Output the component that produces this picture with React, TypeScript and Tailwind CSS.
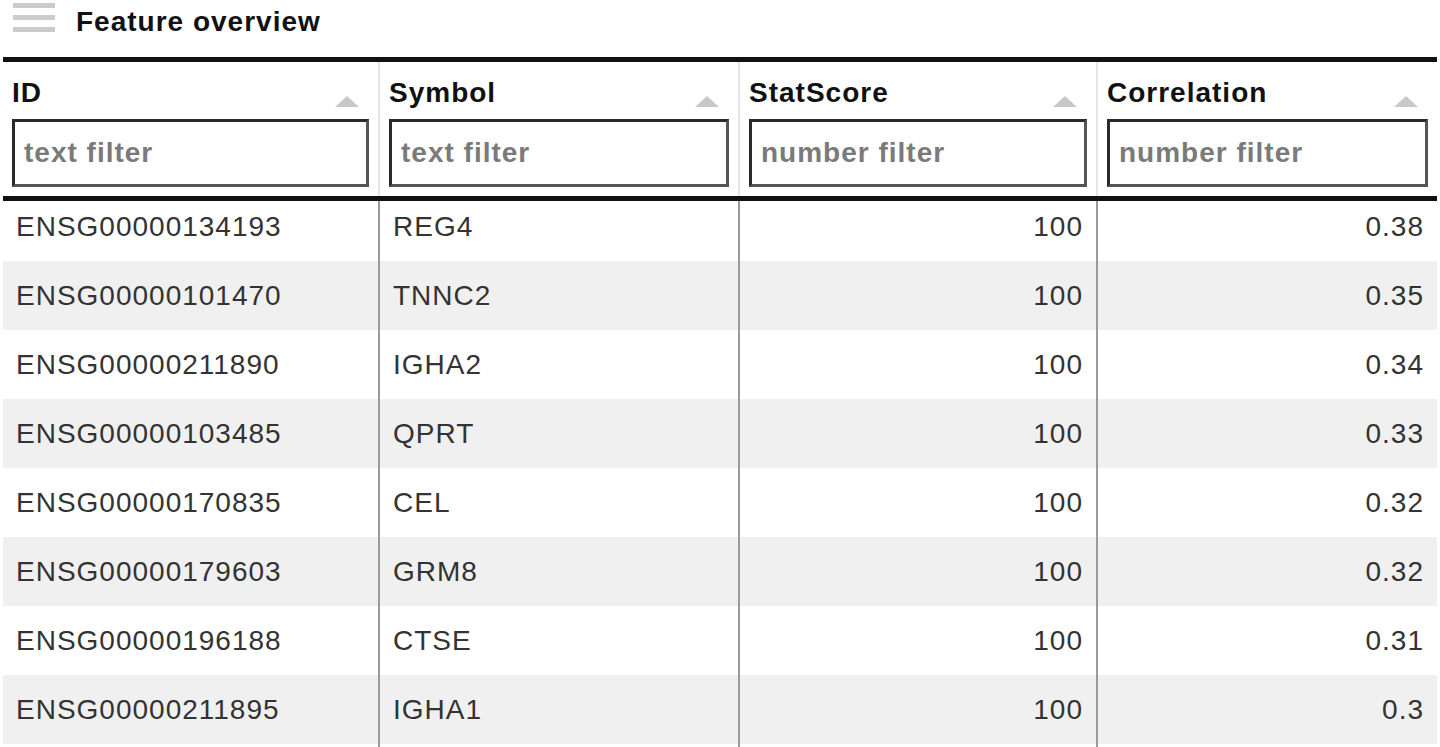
import React from "react";

const rows = [
  ["ENSG00000134193", "REG4", "100", "0.38"],
  ["ENSG00000101470", "TNNC2", "100", "0.35"],
  ["ENSG00000211890", "IGHA2", "100", "0.34"],
  ["ENSG00000103485", "QPRT", "100", "0.33"],
  ["ENSG00000170835", "CEL", "100", "0.32"],
  ["ENSG00000179603", "GRM8", "100", "0.32"],
  ["ENSG00000196188", "CTSE", "100", "0.31"],
  ["ENSG00000211895", "IGHA1", "100", "0.3"],
];

const headers = [
  ["ID", "text filter"],
  ["Symbol", "text filter"],
  ["StatScore", "number filter"],
  ["Correlation", "number filter"],
];

function SortIcon() {
  return (
    <svg width="24" height="11" viewBox="0 0 24 11" className="shrink-0 mb-[2px]">
      <polygon points="12,0 24,11 0,11" fill="#c8c8c8" />
    </svg>
  );
}

export default function App() {
  return (
    <div
      className="w-[1440px] h-[747px] bg-white overflow-hidden text-[28px] tracking-[1px]"
      style={{ fontFamily: '"Liberation Sans", Arial, sans-serif' }}
    >
      <div className="flex items-start h-[57px]">
        <div className="ml-[13px] mt-[3px] flex flex-col gap-[7px] w-[42px]">
          <div className="h-[5px] bg-[#cccccc]" />
          <div className="h-[5px] bg-[#cccccc]" />
          <div className="h-[5px] bg-[#cccccc]" />
        </div>
        <div className="ml-[21px] mt-[6px] font-bold text-[#111] leading-[32px]">
          Feature overview
        </div>
      </div>
      <div className="ml-[3px] w-[1434px]">
        <div className="h-[5px] bg-[#111]" />
        <div className="grid grid-cols-[375px_360px_358px_341px] border-b-[5px] border-[#111] h-[139px]">
          {headers.map(([h, p], i) => (
            <div
              key={h}
              className={
                "flex flex-col pt-[15px] px-[9px] " +
                (i > 0 ? "border-l-2 border-[#e6e6e6]" : "")
              }
            >
              <div className="flex items-end justify-between h-[32px] leading-[32px] font-bold text-[#111] pr-[10px]">
                <span>{h}</span>
                <SortIcon />
              </div>
              <div className="mt-[10px] h-[68px] border-[3px] border-[#2a2a2a] border-b-[#555] border-r-[#555] flex items-center pl-[9px]">
                <span className="font-bold text-[#7a7a7a]">{p}</span>
              </div>
            </div>
          ))}
        </div>
        {rows.map((r, ri) => (
          <div
            key={ri}
            className={
              "grid grid-cols-[375px_360px_358px_341px] text-[#333] " +
              (ri % 2 === 1 ? "bg-[#f0f0f0] " : "bg-white ") +
              (ri === 0 ? "h-[60px]" : "h-[69px]")
            }
          >
            {r.map((c, ci) => (
              <div
                key={ci}
                className={
                  "flex items-center px-[13px] " +
                  (ri === 0 ? "pb-[8px] " : "") +
                  (ci > 0 ? "border-l-2 border-[#9a9a9a] " : "") +
                  (ci >= 2 ? "justify-end" : "")
                }
              >
                {c}
              </div>
            ))}
          </div>
        ))}
        <div className="grid grid-cols-[375px_360px_358px_341px] h-[10px]">
          <div />
          <div className="border-l-2 border-[#9a9a9a]" />
          <div className="border-l-2 border-[#9a9a9a]" />
          <div className="border-l-2 border-[#9a9a9a]" />
        </div>
      </div>
    </div>
  );
}
